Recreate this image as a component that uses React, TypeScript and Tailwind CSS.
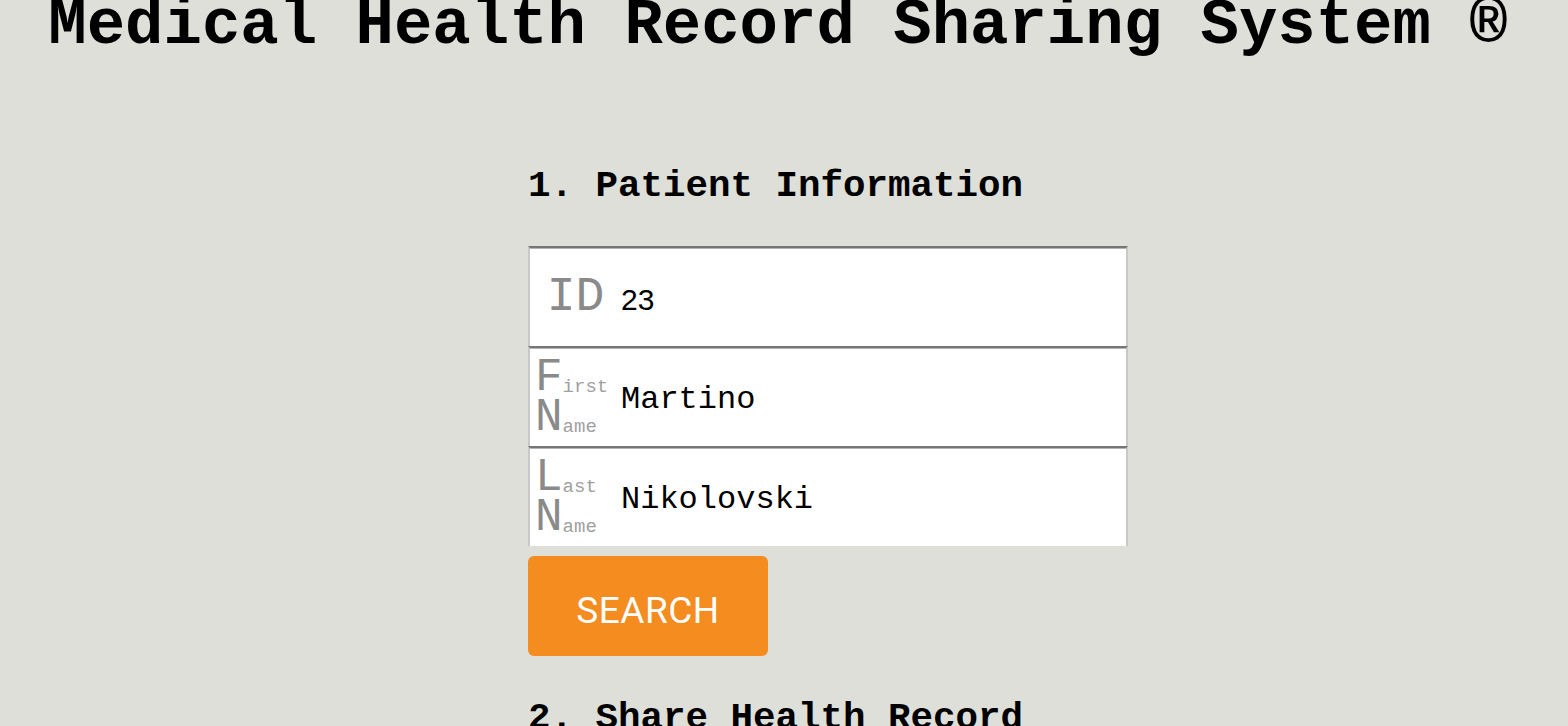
const mono = "font-['Courier_New','Nimbus_Mono_PS','FreeMono','Liberation_Mono',monospace]";

export default function App() {
  return (
    <div className={`min-h-[726px] w-full overflow-hidden bg-[#dddfd8] ${mono}`}>
      <h1 className="-mt-[10px] pr-[12px] text-center text-[64px] font-bold leading-[72px] text-black">
        Medical Health Record Sharing System ®
      </h1>

      <div className="ml-[528px] mt-[102px] w-[600px]">
        <h2 className="text-[37.5px] font-bold leading-[44px] text-black">1. Patient Information</h2>

        <div className="mt-[38px] flex flex-col">
          <Row label={<span className="w-full pl-[6px] text-center text-[48px] leading-none">ID</span>}>
            <span className="font-['Liberation_Sans',sans-serif] text-[30px]">23</span>
          </Row>
          <Row label={<SplitLabel big1="F" small1="irst" big2="N" small2="ame" />}>
            <span className="text-[32px]">Martino</span>
          </Row>
          <Row label={<SplitLabel big1="L" small1="ast" big2="N" small2="ame" />}>
            <span className="text-[32px]">Nikolovski</span>
          </Row>
        </div>

        <button className="mt-[10px] h-[100px] w-[240px] rounded-md bg-[#f48c20] pt-[10px] font-['Roboto',sans-serif] text-[37px] tracking-[0.5px] text-white">
          SEARCH
        </button>

        <h2 className="mt-[40px] text-[37.5px] font-bold leading-[44px] text-black">2. Share Health Record</h2>
      </div>
    </div>
  );
}

function Row({ label, children }: { label: React.ReactNode; children: React.ReactNode }) {
  return (
    <div className="flex h-[100px] items-center border-x-2 border-t-2 border-x-[#c8c8c8] border-t-[#767676] bg-white shadow-[inset_0_1px_0_#b4b4b4]">
      <div className="flex w-[80px] items-center justify-center pl-[5px] text-[#8a8a8a]">{label}</div>
      <div className="pl-[11px] pt-[5px] text-black">{children}</div>
    </div>
  );
}

function SplitLabel({ big1, small1, big2, small2 }: { big1: string; small1: string; big2: string; small2: string }) {
  return (
    <div className="flex w-full flex-col pt-[2px]">
      <div className="flex items-end">
        <span className="text-[46px] leading-[40px]">{big1}</span>
        <span className="text-[19px] leading-[22px] text-[#a0a0a0]">{small1}</span>
      </div>
      <div className="flex items-end">
        <span className="text-[46px] leading-[40px]">{big2}</span>
        <span className="text-[19px] leading-[22px] text-[#a0a0a0]">{small2}</span>
      </div>
    </div>
  );
}
